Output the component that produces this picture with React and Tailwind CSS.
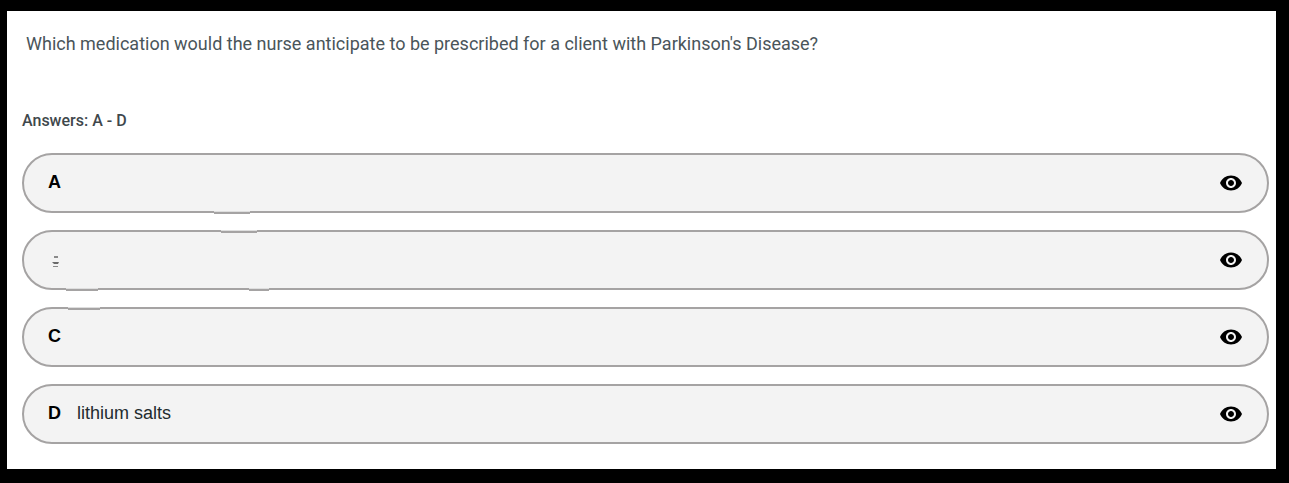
import { MdVisibility } from 'react-icons/md'

const answers = [
  { id: 'A', text: '', marks: ['-bottom-[3px] left-[190px] w-9'] },
  {
    id: 'B',
    text: '',
    smudged: true,
    marks: ['-top-[2px] left-[197px] w-9', '-bottom-[3px] left-[42px] w-8', '-bottom-[3px] left-[225px] w-5'],
  },
  { id: 'C', text: '', marks: ['-top-[2px] left-[44px] w-8'] },
  { id: 'D', text: 'lithium salts', marks: [] },
]

// what is left of a letter that was rubbed out
function Smudge() {
  return (
    <svg viewBox="0 0 12 24" className="w-3 h-6" aria-hidden="true">
      <path d="M6 9h4v2H6z" fill="#8a8a8a" />
      <path d="M4 15h7l-1 2H6z" fill="#6a6a6a" />
      <path d="M5 19h5v1H5z" fill="#8a8a8a" />
    </svg>
  )
}

function AnswerRow({ answer }) {
  return (
    <li className="relative flex items-center justify-between h-[60px] px-6 rounded-full border-2 border-[#a5a3a3] bg-[#f3f3f3]">
      {answer.marks.map((mark) => (
        <span key={mark} className={`absolute h-[3px] border-t border-[#dedede] bg-[#a5a3a3] ${mark}`} />
      ))}
      <button className="flex items-center pb-0.5 text-left">
        <span className="w-[29px] text-lg leading-6 font-bold text-black">
          {answer.smudged ? <Smudge /> : answer.id}
        </span>
        <span className="text-lg leading-6 text-[#222b2e]">{answer.text}</span>
      </button>
      <button aria-label={`Show answer ${answer.id}`} className="text-black">
        <MdVisibility size={24} />
      </button>
    </li>
  )
}

export default function App() {
  return (
    <div className="min-h-screen bg-black pt-[11px] pb-[14px] pl-[7px] pr-[13px]">
      <main className="bg-white pt-5 pb-[25px] pl-[15px] pr-[7px] font-['Roboto',sans-serif]">
        <p className="pl-1 text-lg leading-[26px] text-[#4a555a]">
          Which medication would the nurse anticipate to be prescribed for a client with Parkinson's Disease?
        </p>
        <h2 className="mt-[54px] text-base leading-5 font-medium text-[#3f484c]">Answers: A - D</h2>
        <ul className="mt-[22px] flex flex-col gap-[17px] font-['Liberation_Sans',Arial,sans-serif]">
          {answers.map((answer) => (
            <AnswerRow key={answer.id} answer={answer} />
          ))}
        </ul>
      </main>
    </div>
  )
}
